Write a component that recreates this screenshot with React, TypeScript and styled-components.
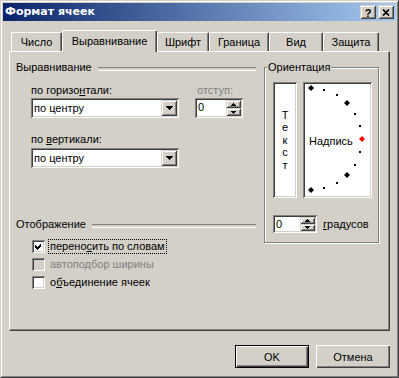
import styled, { createGlobalStyle, css } from "styled-components";

const GlobalStyle = createGlobalStyle`
  html, body {
    margin: 0;
    padding: 0;
    background: #D4D0C8;
  }
  body {
    font-family: "Liberation Sans", Arial, sans-serif;
    font-size: 11px;
    color: #000;
  }
  * {
    box-sizing: border-box;
  }
`;

const raised = css`
  box-shadow: inset 1px 1px #D4D0C8, inset -1px -1px #404040, inset 2px 2px #fff, inset -2px -2px #808080;
`;

const sunken = css`
  box-shadow: inset 1px 1px #808080, inset -1px -1px #fff, inset 2px 2px #404040, inset -2px -2px #D4D0C8;
`;

const tabs = [
  { label: "Число", width: 51 },
  { label: "Выравнивание", width: 95, active: true },
  { label: "Шрифт", width: 52 },
  { label: "Граница", width: 60 },
  { label: "Вид", width: 54 },
  { label: "Защита", width: 56 },
];

const DIAL_CX = 6;
const DIAL_CY = 55;
const DIAL_R = 51;
const dialAngles = Array.from({ length: 13 }, (_, i) => 90 - i * 15);

function DropArrow() {
  return (
    <svg width="7" height="4" viewBox="0 0 7 4" shapeRendering="crispEdges">
      <polygon points="0,0 7,0 4,4 3,4" fill="#000" />
    </svg>
  );
}

function SpinArrow({ up }: { up?: boolean }) {
  return (
    <svg width="5" height="3" viewBox="0 0 5 3" shapeRendering="crispEdges">
      <polygon points={up ? "2,0 3,0 5,3 0,3" : "0,0 5,0 3,3 2,3"} fill="#000" />
    </svg>
  );
}

function ComboBox({ value }: { value: string }) {
  return (
    <Combo>
      <ComboText>{value}</ComboText>
      <ComboButton>
        <DropArrow />
      </ComboButton>
    </Combo>
  );
}

function SpinBox({ value, width, height }: { value: string; width: number; height: number }) {
  return (
    <Spin $width={width} $height={height}>
      <SpinText>{value}</SpinText>
      <SpinButtons>
        <SpinButton><SpinArrow up /></SpinButton>
        <SpinButton><SpinArrow /></SpinButton>
      </SpinButtons>
    </Spin>
  );
}

function CheckBox({ checked, disabled, focused, children }: {
  checked?: boolean;
  disabled?: boolean;
  focused?: boolean;
  children: React.ReactNode;
}) {
  return (
    <CheckRow>
      <CheckSquare $disabled={disabled}>
        {checked && (
          <svg width="7" height="7" viewBox="0 0 7 7" shapeRendering="crispEdges">
            <path d="M0 2 L2 4 L6 0 L6 3 L2 7 L0 5 Z" fill="#000" />
          </svg>
        )}
      </CheckSquare>
      <CheckLabel $disabled={disabled} $focused={focused}>{children}</CheckLabel>
    </CheckRow>
  );
}

export default function App() {
  return (
    <>
      <GlobalStyle />
      <Window>
        <Frame>
          <TitleBar>
            <Title>Формат ячеек</Title>
            <TitleButtons>
              <TitleButton>?</TitleButton>
              <TitleButton>
                <svg width="8" height="7" viewBox="0 0 8 7">
                  <path d="M1 0.5 L7 6.5 M7 0.5 L1 6.5" stroke="#000" strokeWidth="1.7" />
                </svg>
              </TitleButton>
            </TitleButtons>
          </TitleBar>

          <Body>
            <TabRow>
              {tabs.map((t) => (
                <Tab key={t.label} $width={t.width} $active={t.active}>
                  {t.label}
                </Tab>
              ))}
            </TabRow>

            <Panel>
              <LeftColumn>
                <GroupHeader>Выравнивание</GroupHeader>
                <Indent>
                  <FieldRow>
                    <Field>
                      <FieldLabel>по горизо<u>н</u>тали:</FieldLabel>
                      <ComboBox value="по центру" />
                    </Field>
                    <Field>
                      <FieldLabel $disabled>отступ:</FieldLabel>
                      <SpinBox value="0" width={48} height={20} />
                    </Field>
                  </FieldRow>
                  <Field $gap={15}>
                    <FieldLabel $below={2}>по <u>в</u>ертикали:</FieldLabel>
                    <ComboBox value="по центру" />
                  </Field>
                </Indent>

                <GroupHeader $top={50}>Отображение</GroupHeader>
                <CheckList>
                  <CheckBox checked focused>перено<u>с</u>ить по словам</CheckBox>
                  <CheckBox disabled>автоподбор ширины</CheckBox>
                  <CheckBox>о<u>б</u>ъединение ячеек</CheckBox>
                </CheckList>
              </LeftColumn>

              <OrientationGroup>
                <Legend>Ориентация</Legend>
                <OrientationRow>
                  <VerticalText>
                    {"Текст".split("").map((ch, i) => (
                      <span key={i}>{ch}</span>
                    ))}
                  </VerticalText>
                  <Dial>
                    <svg width="65" height="112" viewBox="0 0 65 112" shapeRendering="crispEdges">
                      {dialAngles.map((a) => {
                        const rad = (a * Math.PI) / 180;
                        const x = Math.round(DIAL_CX + DIAL_R * Math.cos(rad));
                        const y = Math.round(DIAL_CY - DIAL_R * Math.sin(rad));
                        if (a % 45 === 0) {
                          return (
                            <polygon
                              key={a}
                              points={`${x},${y - 3} ${x + 3},${y} ${x},${y + 3} ${x - 3},${y}`}
                              fill={a === 0 ? "#FF0000" : "#000"}
                              shapeRendering="auto"
                            />
                          );
                        }
                        return <rect key={a} x={x - 1} y={y - 1} width="2" height="2" fill="#000" />;
                      })}
                    </svg>
                    <DialLabel>Надпись</DialLabel>
                  </Dial>
                </OrientationRow>
                <DegreesRow>
                  <SpinBox value="0" width={44} height={18} />
                  <span><u>г</u>радусов</span>
                </DegreesRow>
              </OrientationGroup>
            </Panel>

            <ButtonRow>
              <PushButton $default>OK</PushButton>
              <PushButton>Отмена</PushButton>
            </ButtonRow>
          </Body>
        </Frame>
      </Window>
    </>
  );
}

const Window = styled.div`
  width: 399px;
  height: 378px;
  background: #D4D0C8;
  border: 1px solid;
  border-color: #D4D0C8 #404040 #404040 #D4D0C8;
`;

const Frame = styled.div`
  height: 100%;
  border: 1px solid;
  border-color: #fff #808080 #808080 #fff;
  padding: 1px;
  display: flex;
  flex-direction: column;
`;

const TitleBar = styled.div`
  height: 18px;
  display: flex;
  align-items: center;
  padding: 0 2px;
  background: linear-gradient(to right, #0A246A, #A6CAF0);
`;

const Title = styled.div`
  flex: 1;
  color: #fff;
  font-family: "DejaVu Sans", "Liberation Sans", sans-serif;
  font-weight: 700;
  font-size: 11px;
  line-height: 18px;
  white-space: nowrap;
`;

const TitleButtons = styled.div`
  display: flex;
  gap: 2px;
`;

const TitleButton = styled.div`
  width: 16px;
  height: 14px;
  background: #D4D0C8;
  ${raised};
  display: flex;
  align-items: center;
  justify-content: center;
  font-weight: 700;
  font-size: 11px;
  line-height: 14px;
  padding-top: 1px;
`;

const Body = styled.div`
  flex: 1;
  display: flex;
  flex-direction: column;
  padding: 9px 6px 0 6px;
`;

const TabRow = styled.div`
  display: flex;
  align-items: flex-end;
  height: 21px;
  margin-left: 2px;
`;

const Tab = styled.div<{ $width: number; $active?: boolean }>`
  position: relative;
  width: ${({ $width }) => $width}px;
  height: ${({ $active }) => ($active ? 22 : 19)}px;
  margin-bottom: ${({ $active }) => ($active ? -1 : 0)}px;
  z-index: ${({ $active }) => ($active ? 1 : 0)};
  background: #D4D0C8;
  border-top: 1px solid #fff;
  border-left: 1px solid #fff;
  border-right: 1px solid #404040;
  border-radius: 2px 2px 0 0;
  box-shadow: inset -1px 0 #808080;
  text-align: center;
  line-height: 13px;
  padding-top: ${({ $active }) => ($active ? 4 : 3)}px;
  white-space: nowrap;
`;

const Panel = styled.div`
  width: 381px;
  height: 280px;
  border: 1px solid;
  border-color: #fff #404040 #404040 #fff;
  box-shadow: inset -1px -1px #808080;
  padding: 9px 8px 0 6px;
  display: flex;
  gap: 8px;
  align-items: flex-start;
`;

const LeftColumn = styled.div`
  width: 240px;
  display: flex;
  flex-direction: column;
`;

const GroupHeader = styled.div<{ $top?: number }>`
  display: flex;
  align-items: center;
  height: 13px;
  line-height: 13px;
  margin-top: ${({ $top }) => $top ?? 0}px;
  white-space: nowrap;

  &::after {
    content: "";
    flex: 1;
    height: 2px;
    margin: 2px 0 0 6px;
    border-top: 1px solid #808080;
    border-bottom: 1px solid #fff;
  }
`;

const Indent = styled.div`
  padding-left: 15px;
  margin-top: 10px;
  display: flex;
  flex-direction: column;
`;

const FieldRow = styled.div`
  display: flex;
  gap: 16px;
`;

const Field = styled.div<{ $gap?: number }>`
  display: flex;
  flex-direction: column;
  margin-top: ${({ $gap }) => $gap ?? 0}px;
`;

const FieldLabel = styled.div<{ $disabled?: boolean; $below?: number }>`
  line-height: 13px;
  margin-bottom: ${({ $below }) => $below ?? 1}px;
  padding-left: ${({ $disabled }) => ($disabled ? 2 : 0)}px;
  color: ${({ $disabled }) => ($disabled ? "#808080" : "#000")};
  white-space: nowrap;
`;

const Combo = styled.div`
  width: 148px;
  height: 20px;
  background: #fff;
  ${sunken};
  padding: 2px;
  display: flex;
`;

const ComboText = styled.div`
  flex: 1;
  line-height: 16px;
  padding-left: 1px;
  white-space: nowrap;
`;

const ComboButton = styled.div`
  width: 16px;
  height: 16px;
  background: #D4D0C8;
  ${raised};
  display: flex;
  align-items: center;
  justify-content: center;
`;

const Spin = styled.div<{ $width: number; $height: number }>`
  width: ${({ $width }) => $width}px;
  height: ${({ $height }) => $height}px;
  background: #fff;
  ${sunken};
  padding: 2px;
  display: flex;
`;

const SpinText = styled.div`
  flex: 1;
  line-height: 14px;
  padding-left: 1px;
`;

const SpinButtons = styled.div`
  width: 15px;
  display: flex;
  flex-direction: column;
`;

const SpinButton = styled.div`
  flex: 1;
  background: #D4D0C8;
  ${raised};
  display: flex;
  align-items: center;
  justify-content: center;
`;

const CheckList = styled.div`
  margin-top: 6px;
  padding-left: 16px;
  display: flex;
  flex-direction: column;
`;

const CheckRow = styled.div`
  height: 18px;
  display: flex;
  align-items: center;
  gap: 4px;
`;

const CheckSquare = styled.div<{ $disabled?: boolean }>`
  width: 13px;
  height: 13px;
  background: ${({ $disabled }) => ($disabled ? "#D4D0C8" : "#fff")};
  ${sunken};
  display: flex;
  align-items: center;
  justify-content: center;
`;

const CheckLabel = styled.span<{ $disabled?: boolean; $focused?: boolean }>`
  line-height: 13px;
  padding: 0 1px;
  color: ${({ $disabled }) => ($disabled ? "#808080" : "#000")};
  outline: ${({ $focused }) => ($focused ? "1px dotted #000" : "none")};
  white-space: nowrap;
`;

const OrientationGroup = styled.fieldset`
  width: 115px;
  margin: 0;
  padding: 8px 0 9px 8px;
  border: 1px solid #808080;
  box-shadow: 1px 1px 0 #fff, inset 1px 1px 0 #fff;
  min-width: 0;
`;

const Legend = styled.legend`
  margin-left: -6px;
  padding: 0 1px;
  line-height: 13px;
  background: #D4D0C8;
`;

const OrientationRow = styled.div`
  display: flex;
  gap: 6px;
`;

const VerticalText = styled.div`
  width: 24px;
  height: 116px;
  background: #fff;
  ${sunken};
  display: flex;
  flex-direction: column;
  align-items: center;
  justify-content: center;
  line-height: 12.5px;
`;

const Dial = styled.div`
  position: relative;
  width: 69px;
  height: 116px;
  background: #fff;
  ${sunken};
  padding: 2px;

  svg {
    display: block;
  }
`;

const DialLabel = styled.span`
  position: absolute;
  left: 6px;
  top: 53px;
  line-height: 13px;
`;

const DegreesRow = styled.div`
  margin-top: 17px;
  display: flex;
  align-items: center;
  gap: 6px;
  line-height: 13px;
`;

const ButtonRow = styled.div`
  margin-top: 14px;
  display: flex;
  justify-content: flex-end;
  gap: 7px;
`;

const PushButton = styled.div<{ $default?: boolean }>`
  width: 74px;
  height: 23px;
  background: #D4D0C8;
  display: flex;
  align-items: center;
  justify-content: center;
  ${({ $default }) =>
    $default
      ? css`
          border: 1px solid #000;
          box-shadow: inset 1px 1px #fff, inset -1px -1px #404040, inset -2px -2px #808080;
        `
      : css`
          box-shadow: inset 1px 1px #fff, inset -1px -1px #404040, inset -2px -2px #808080;
        `}
`;
